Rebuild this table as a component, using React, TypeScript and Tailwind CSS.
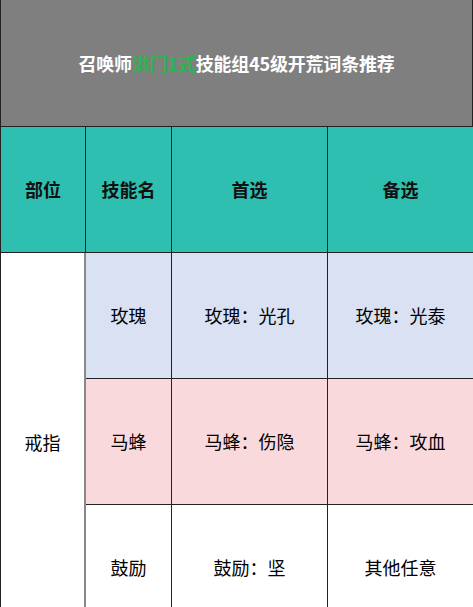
const FONT = { fontFamily: '"Noto Sans CJK SC", "Noto Sans", sans-serif' };

const ROWS = [
  { skill: "玫瑰", first: "玫瑰：光孔", second: "玫瑰：光泰", bg: "bg-[#d9e1f2]" },
  { skill: "马蜂", first: "马蜂：伤隐", second: "马蜂：攻血", bg: "bg-[#fad9dd]" },
  { skill: "鼓励", first: "鼓励：坚", second: "其他任意", bg: "bg-white" },
];

export default function App() {
  return (
    <div className="w-[473px] h-[607px] overflow-hidden bg-white text-black" style={FONT}>
      {/* Title */}
      <div className="h-[127px] bg-[#7f7f7f] border-l border-r border-b border-[#222] flex items-center justify-center">
        <h1 className="text-[18px] font-bold text-white tracking-[-0.2px]">
          召唤师<span className="text-[#2cb54c]">洪门1式</span>技能组45级开荒词条推荐
        </h1>
      </div>

      {/* Table */}
      <div className="grid grid-cols-[85px_86px_156px_146px] grid-rows-[126px_126px_126px_126px] border-l border-[#222]">
        {["部位", "技能名", "首选", "备选"].map((h) => (
          <div
            key={h}
            className="bg-[#2fbfb1] border-r border-b border-[#222] flex items-center justify-center text-[18px] font-bold text-[#111]"
          >
            {h}
          </div>
        ))}

        <div className="row-span-3 bg-white border-r-2 border-[#888] flex items-center justify-center text-[18px]">
          戒指
        </div>

        {ROWS.map((r) => (
          <div key={r.skill} className="contents">
            <div className={`${r.bg} border-r border-b border-[#222] flex items-center justify-center text-[18px]`}>
              {r.skill}
            </div>
            <div className={`${r.bg} border-r border-b border-[#222] flex items-center justify-center text-[18px]`}>
              {r.first}
            </div>
            <div className={`${r.bg} border-r border-b border-[#222] flex items-center justify-center text-[18px]`}>
              {r.second}
            </div>
          </div>
        ))}
      </div>
    </div>
  );
}
